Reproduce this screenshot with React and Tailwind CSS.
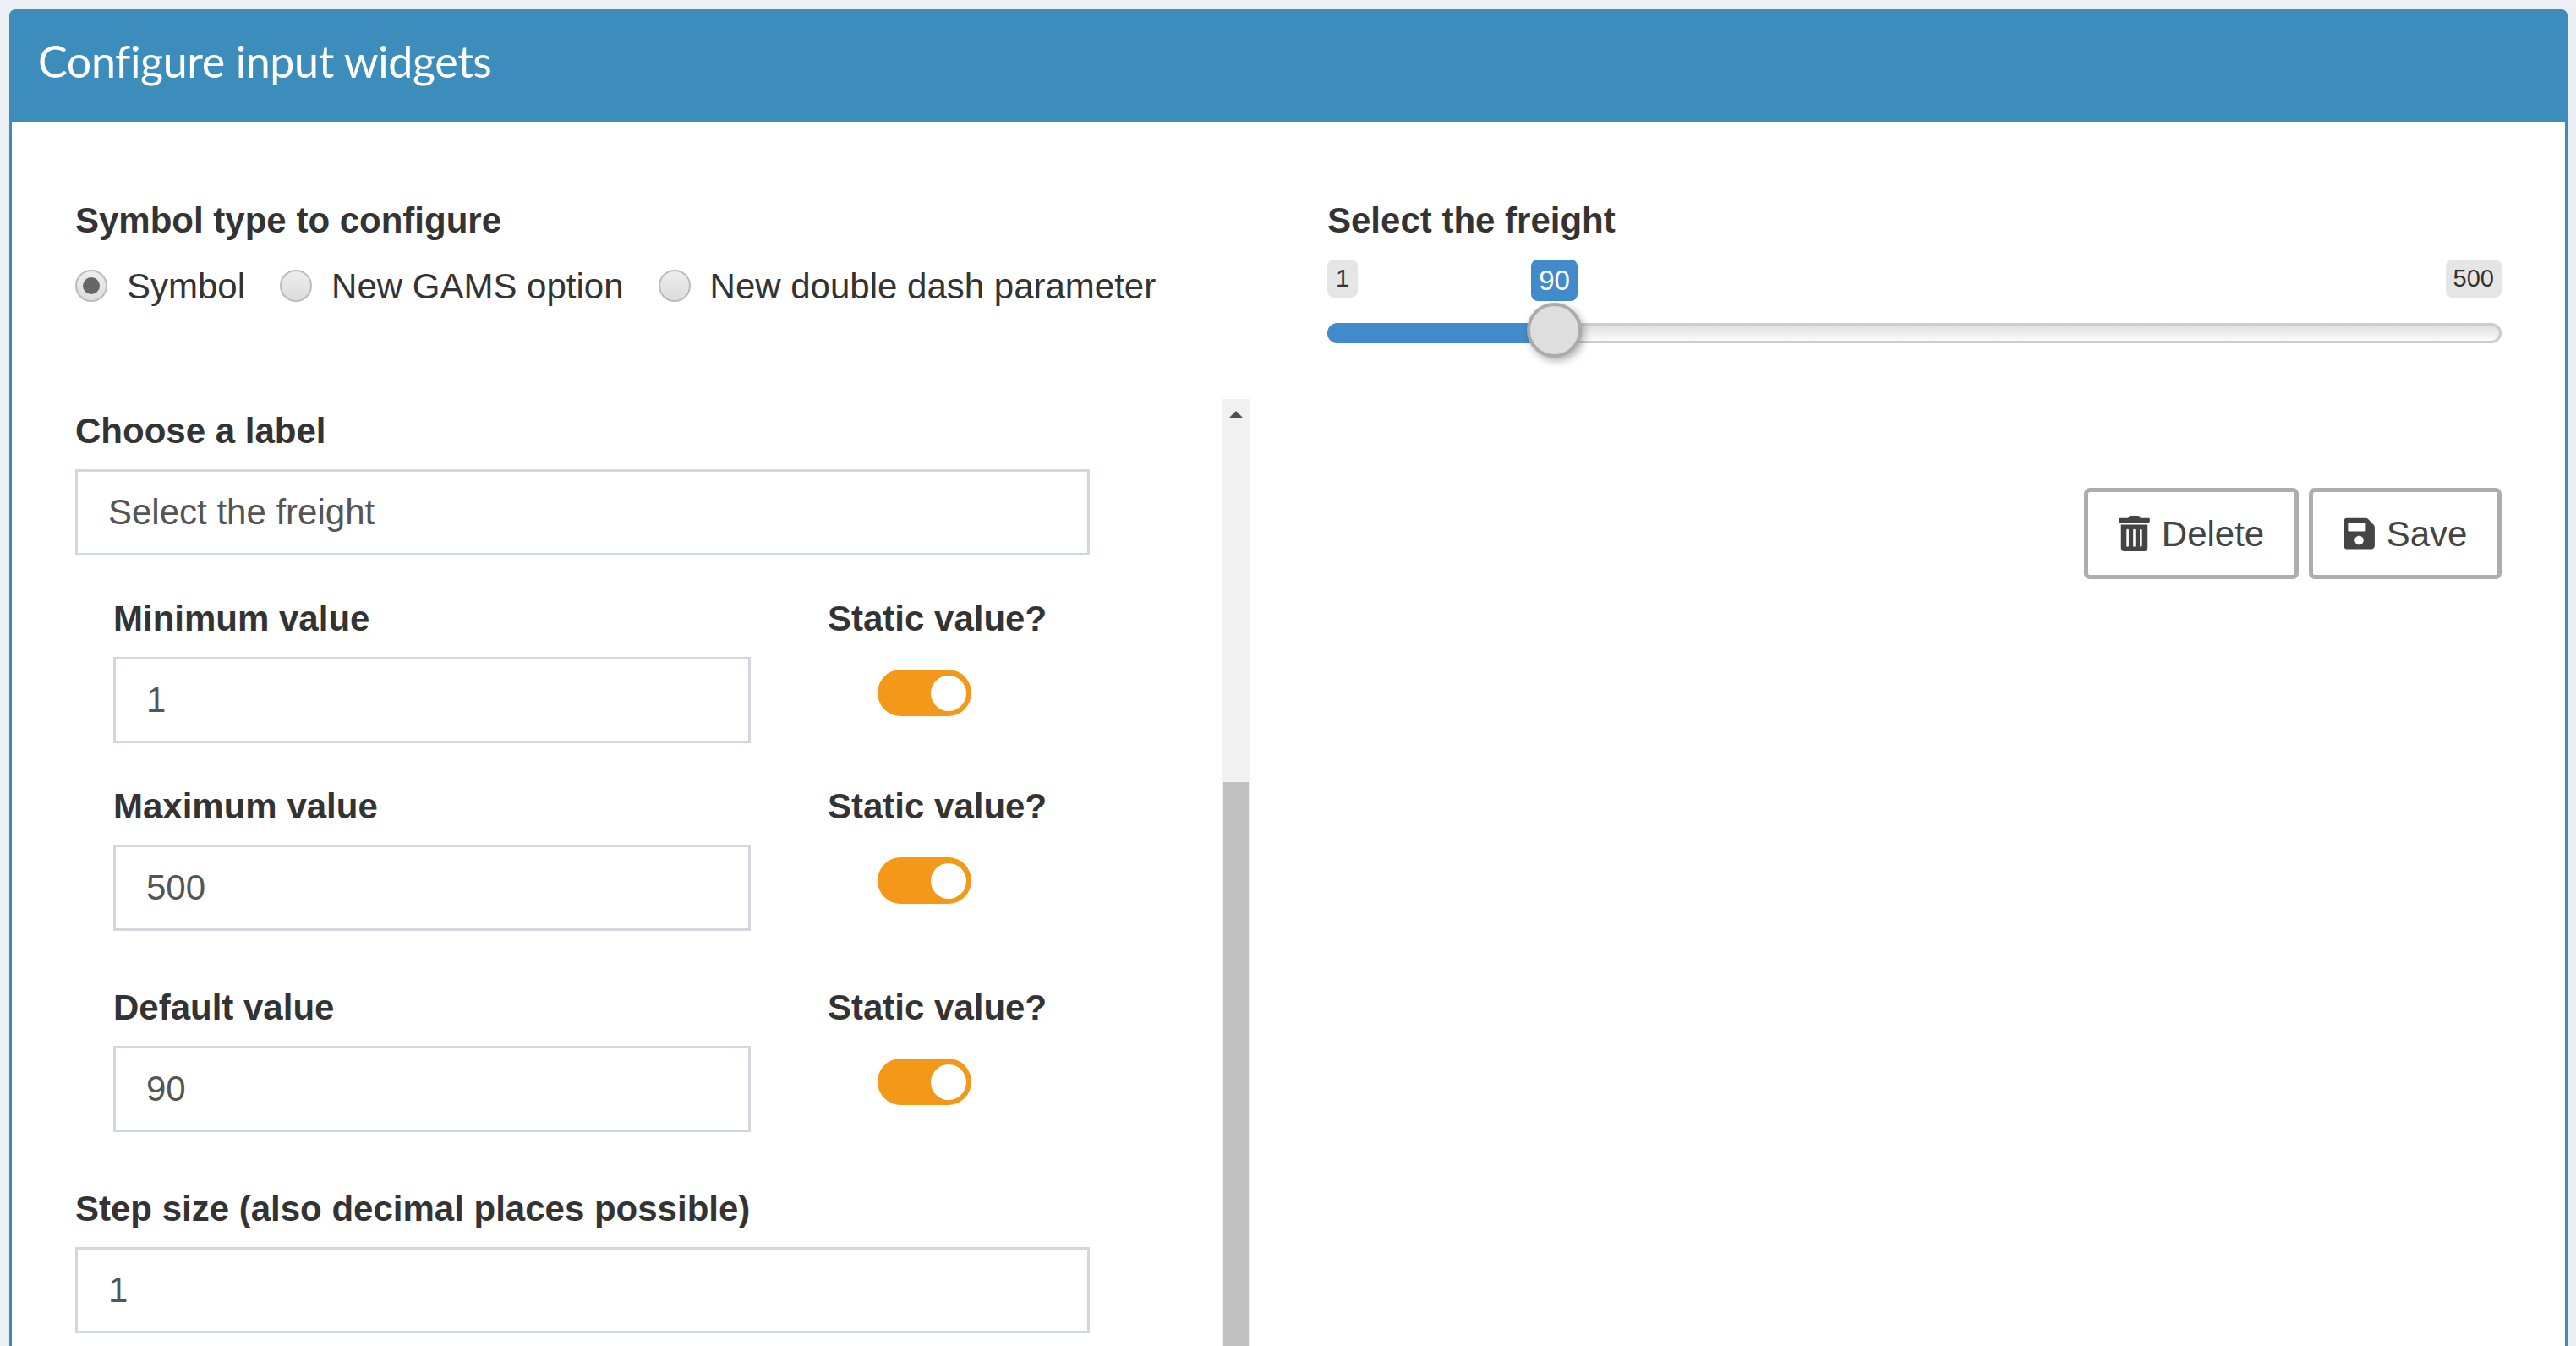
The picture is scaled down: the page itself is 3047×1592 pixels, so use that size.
import React from 'react';
import { FaTrashAlt, FaSave } from 'react-icons/fa';

const Field = ({ label, value, className = '', width = 'w-[1200px]' }) => (
    <div className={className}>
        <div className="h-[60px] leading-[60px] font-bold">{label}</div>
        <input
            readOnly
            value={value}
            className={`block mt-[15px] h-[102px] ${width} border-[3px] border-[#d2d6de] bg-white px-[36px] text-[#555] outline-none`}
        />
    </div>
);

const Toggle = () => (
    <div className="mt-[30px] ml-[59px] flex h-[55px] w-[111px] items-center justify-end rounded-full bg-[#f39819] pr-[6px]">
        <div className="h-[42px] w-[42px] rounded-full bg-white"></div>
    </div>
);

const Radio = ({ checked, label, className = '' }) => (
    <div className={`flex items-center gap-[23px] ${className}`}>
        <div className="flex h-[38px] w-[38px] items-center justify-center rounded-full border-2 border-[#bbb] bg-gradient-to-b from-[#eee] to-[#dcdcdc]">
            {checked && <div className="h-[20px] w-[20px] rounded-full bg-[#666]"></div>}
        </div>
        <span>{label}</span>
    </div>
);

const ValueRow = ({ label, value, className = '' }) => (
    <div className={`ml-[45px] flex ${className}`}>
        <Field label={label} value={value} width="w-[754px]" />
        <div className="ml-[91px]">
            <div className="h-[60px] leading-[60px] font-bold">Static value?</div>
            <Toggle />
        </div>
    </div>
);

export default function App() {
    return (
        <div className="h-[1592px] overflow-hidden bg-[#ecf0f5] pt-[11px] pl-[11px] pr-[10px] font-['Liberation_Sans',sans-serif] text-[42px] text-[#333]">
            <div className="h-[1700px] rounded-t-[8px] border-x-[3px] border-[#3c8dbc] bg-white">
                {/* header */}
                <div className="-mx-[3px] flex h-[133px] items-center rounded-t-[8px] bg-[#3c8dbc] pb-[12px] pl-[34px] font-['Lato',sans-serif] text-[52px] tracking-[-0.4px] text-white">
                    Configure input widgets
                </div>

                <div className="flex pl-[75px] pr-[75px]">
                    {/* left column */}
                    <div className="w-[1481px] shrink-0">
                        <div className="mt-[87px] h-[60px] leading-[60px] font-bold">Symbol type to configure</div>
                        <div className="mt-[28px] flex h-[38px] items-center">
                            <Radio checked label="Symbol" />
                            <Radio label="New GAMS option" className="ml-[41px]" />
                            <Radio label="New double dash parameter" className="ml-[41px]" />
                        </div>

                        <div className="mt-[115px] flex">
                            <div className="w-[1356px] pt-[8px]">
                                <Field label="Choose a label" value="Select the freight" />
                                <ValueRow label="Minimum value" value="1" className="mt-[45px]" />
                                <ValueRow label="Maximum value" value="500" className="mt-[45px]" />
                                <ValueRow label="Default value" value="90" className="mt-[61px]" />
                                <Field label="Step size (also decimal places possible)" value="1" className="mt-[61px]" />
                            </div>
                            {/* scrollbar */}
                            <div className="flex h-[1200px] w-[33px] flex-col items-center bg-[#f1f1f1]">
                                <div className="mt-[14px] h-0 w-0 border-x-[8px] border-b-[8px] border-x-transparent border-b-[#505050]"></div>
                                <div className="mt-[431px] w-[30px] flex-1 bg-[#c1c1c1]"></div>
                            </div>
                        </div>
                    </div>

                    {/* right column */}
                    <div className="flex-1">
                        <div className="mt-[87px] h-[60px] leading-[60px] font-bold">Select the freight</div>
                        <div className="relative mt-[16px] h-[116px]">
                            <div className="flex justify-between text-[29px] leading-[45px]">
                                <span className="h-[45px] rounded-[8px] bg-[#e5e5e5] px-[10px]">1</span>
                                <span className="h-[45px] rounded-[8px] bg-[#e5e5e5] px-[9px]">500</span>
                            </div>
                            <div className="absolute left-[241px] top-0 h-[49px] w-[55px] rounded-[8px] bg-[#428bca] text-center text-[33px] leading-[49px] text-white">90</div>
                            <div className="absolute inset-x-0 top-[75px] h-[24px] rounded-full border-[3px] border-[#ccc] bg-gradient-to-b from-[#dfdfdf] to-[#fbfbfb]"></div>
                            <div className="absolute left-0 top-[75px] h-[24px] w-[260px] rounded-l-full bg-[#428bca]"></div>
                            <div className="absolute left-[236px] top-[51px] h-[65px] w-[65px] rounded-full border-[4px] border-[#ababab] bg-[#dedede] shadow-[3px_4px_10px_rgba(0,0,0,0.3)]"></div>
                        </div>
                        <div className="mt-[154px] flex justify-end gap-[12px] text-[#444]">
                            <button className="flex h-[108px] w-[254px] items-center justify-center gap-[14px] rounded-[7px] border-[5px] border-[#adadad] bg-white">
                                <FaTrashAlt className="h-[42px] w-[37px]" />
                                <span>Delete</span>
                            </button>
                            <button className="flex h-[108px] w-[228px] items-center justify-center gap-[14px] rounded-[7px] border-[5px] border-[#adadad] bg-white">
                                <FaSave className="h-[42px] w-[37px]" />
                                <span>Save</span>
                            </button>
                        </div>
                    </div>
                </div>
            </div>
        </div>
    );
}
